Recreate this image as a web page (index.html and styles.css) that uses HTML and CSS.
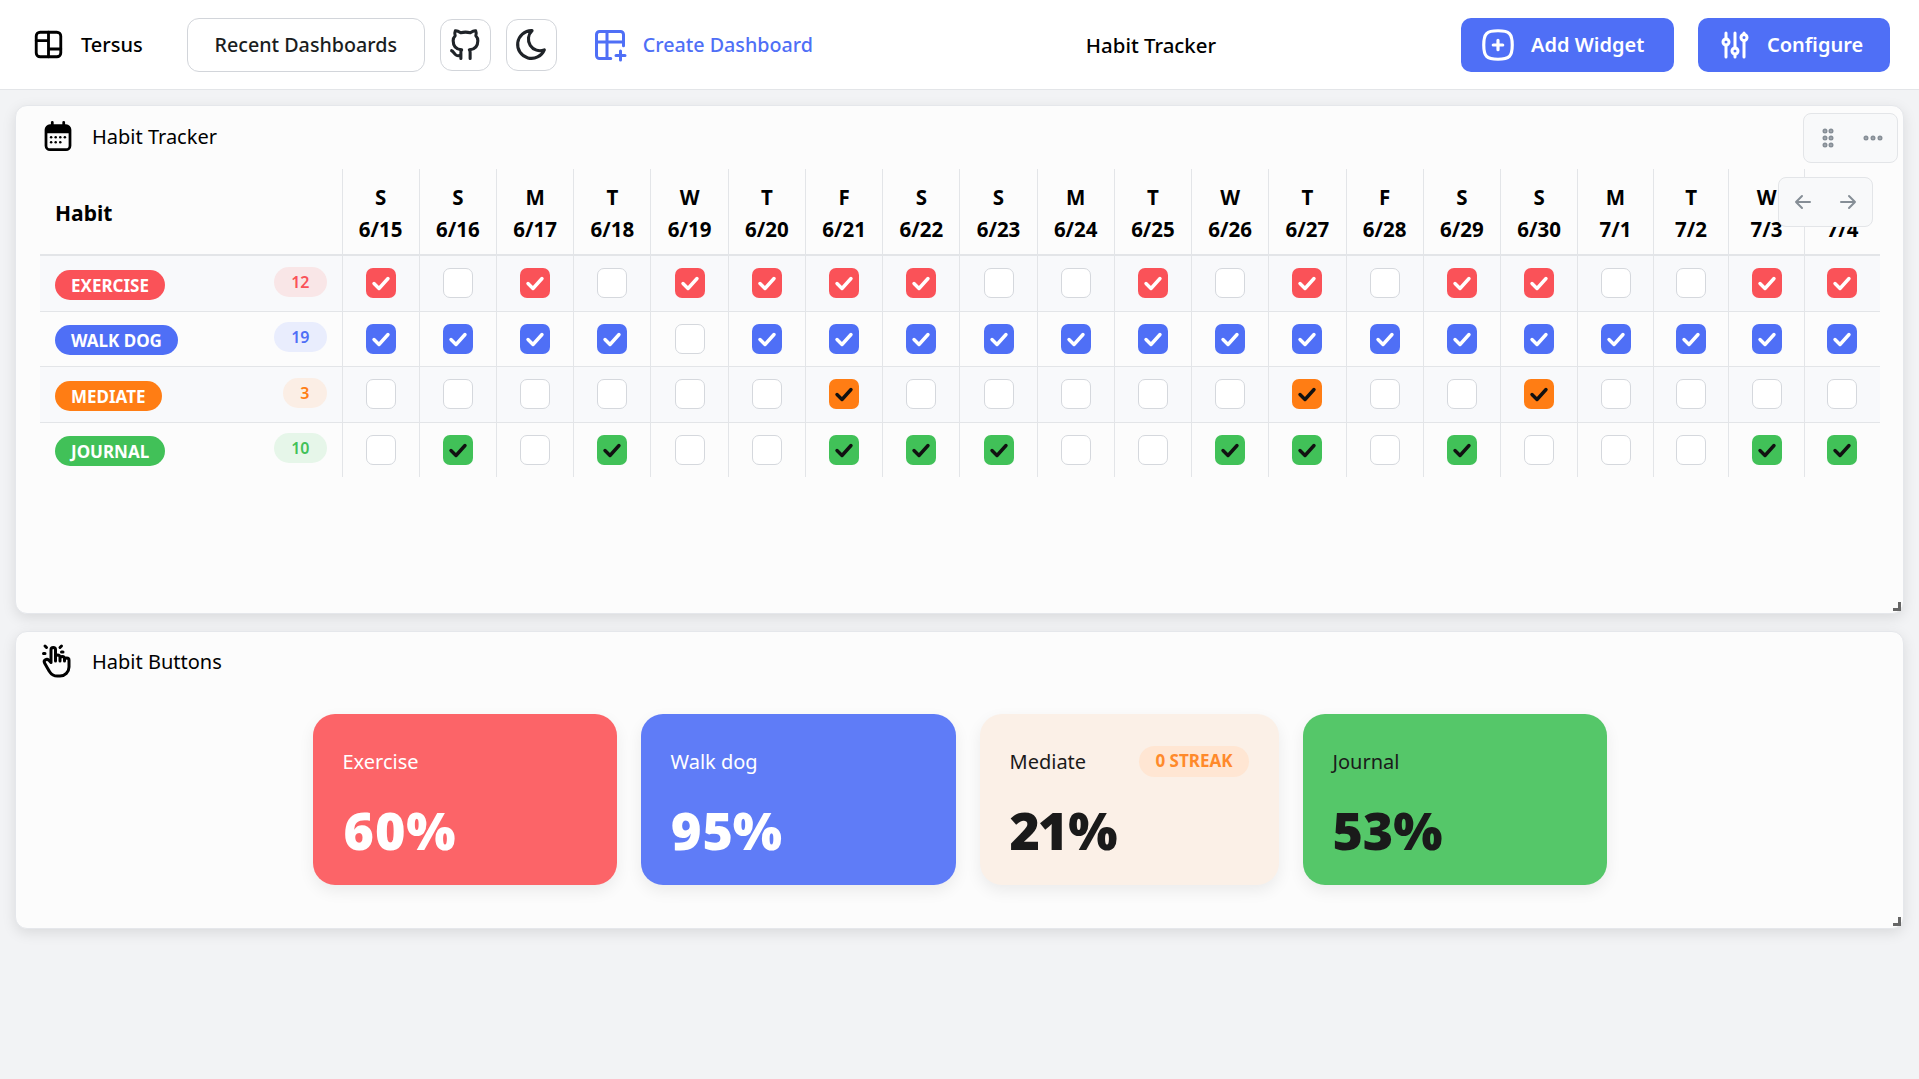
FILE: index.html
```html
<!DOCTYPE html>
<html lang="en">
<head>
  <meta charset="UTF-8">
  <meta name="viewport" content="width=device-width, initial-scale=1.0">
  <title>Habit Tracker</title>
  <link rel="stylesheet" href="styles.css">
</head>
<body>
  <svg class="defs" width="0" height="0">
    <symbol id="check" viewBox="0 0 24 24"><path d="M5 12.500l5 5l9 -10" fill="none" stroke="currentColor" stroke-width="3.400" stroke-linecap="round" stroke-linejoin="round"/></symbol>
  </svg>

  <nav class="navbar">
    <a class="brand">
      <svg class="icon icon-logo" viewBox="0 0 24 24"><rect x="2.500" y="2.500" width="19" height="19" rx="3"/><path d="M12 2.500v19M2.500 9h9.500M12 15.500h9.500"/></svg>
      <span>Tersus</span>
    </a>
    <button class="btn-outline">Recent Dashboards</button>
    <button class="btn-icon">
      <svg class="icon" viewBox="0 0 24 24"><path d="M9 19c-4.300 1.400 -4.300 -2.500 -6 -3m12 5v-3.500c0 -1 .1 -1.400 -.5 -2c2.800 -.3 5.500 -1.400 5.500 -6a4.600 4.600 0 0 0 -1.300 -3.200a4.200 4.200 0 0 0 -.1 -3.200s-1.100 -.3 -3.500 1.300a12.300 12.300 0 0 0 -6.200 0c-2.400 -1.600 -3.500 -1.300 -3.500 -1.300a4.200 4.200 0 0 0 -.1 3.200a4.600 4.600 0 0 0 -1.300 3.200c0 4.600 2.700 5.700 5.500 6c-.6 .6 -.6 1.200 -.5 2v3.500"/></svg>
    </button>
    <button class="btn-icon">
      <svg class="icon" viewBox="0 0 24 24"><path d="M12 3c.132 0 .263 0 .393 0a7.500 7.500 0 0 0 7.920 12.446a9 9 0 1 1 -8.313 -12.454z"/></svg>
    </button>
    <a class="create-link">
      <svg class="icon icon-create" viewBox="0 0 24 24"><path d="M12.500 21h-7.500a2 2 0 0 1 -2 -2v-14a2 2 0 0 1 2 -2h14a2 2 0 0 1 2 2v7.500M3 10h18M10 3v18M16 19h6M19 16v6"/></svg>
      <span>Create Dashboard</span>
    </a>
    <div class="nav-title">Habit Tracker</div>
    <button class="btn-primary btn-add">
      <svg class="icon" viewBox="0 0 24 24"><path d="M9 12h6M12 9v6M12 3c7.200 0 9 1.800 9 9s-1.800 9 -9 9s-9 -1.800 -9 -9s1.800 -9 9 -9z"/></svg>
      Add Widget
    </button>
    <button class="btn-primary btn-config">
      <svg class="icon" viewBox="0 0 24 24"><circle cx="6" cy="10" r="2"/><path d="M6 4v4M6 12v8"/><circle cx="12" cy="16" r="2"/><path d="M12 4v10M12 18v2"/><circle cx="18" cy="7" r="2"/><path d="M18 4v1M18 9v11"/></svg>
      Configure
    </button>
  </nav>

  <main class="dashboard">
    <section class="widget widget-tracker">
      <header class="widget-header">
        <svg class="widget-icon icon-calendar" viewBox="0 0 28 28"><rect x="3.500" y="5" width="21" height="21" rx="3.500" fill="none" stroke="currentColor" stroke-width="2.400"/><path d="M3.500 8.500a3.500 3.500 0 0 1 3.500 -3.500h14a3.500 3.500 0 0 1 3.500 3.500v3h-21z" fill="currentColor"/><path d="M9 2v5M19 2v5" stroke="currentColor" stroke-width="2.400" stroke-linecap="round"/><g fill="currentColor"><circle cx="8" cy="15" r="1.100"/><circle cx="12" cy="15" r="1.100"/><circle cx="16" cy="15" r="1.100"/><circle cx="20" cy="15" r="1.100"/><circle cx="8" cy="19.500" r="1.100"/><circle cx="12" cy="19.500" r="1.100"/><circle cx="16" cy="19.500" r="1.100"/></g></svg>
        <h2>Habit Tracker</h2>
      </header>

      <div class="tool-box tool-widget">
        <svg class="tool-icon" viewBox="0 0 24 24" fill="currentColor" stroke="none"><circle cx="9" cy="5" r="1.500"/><circle cx="15" cy="5" r="1.500"/><circle cx="9" cy="12" r="1.500"/><circle cx="15" cy="12" r="1.500"/><circle cx="9" cy="19" r="1.500"/><circle cx="15" cy="19" r="1.500"/></svg>
        <svg class="tool-icon" viewBox="0 0 24 24" fill="currentColor" stroke="none"><circle cx="5" cy="12" r="1.500"/><circle cx="12" cy="12" r="1.500"/><circle cx="19" cy="12" r="1.500"/></svg>
      </div>
      <div class="tool-box tool-scroll">
        <svg class="tool-icon arrow" viewBox="0 0 24 24"><path d="M5 12h14M5 12l6 6M5 12l6 -6"/></svg>
        <svg class="tool-icon arrow" viewBox="0 0 24 24"><path d="M5 12h14M13 18l6 -6M13 6l6 6"/></svg>
      </div>

      <table class="habit-table">
        <colgroup>
          <col class="col-habit">
          <col class="col-day"><col class="col-day"><col class="col-day"><col class="col-day"><col class="col-day"><col class="col-day"><col class="col-day"><col class="col-day">
          <col class="col-day"><col class="col-day"><col class="col-day"><col class="col-day"><col class="col-day"><col class="col-day"><col class="col-day"><col class="col-day">
          <col class="col-day-sm"><col class="col-day-sm"><col class="col-day-sm"><col class="col-day-sm">
        </colgroup>
        <thead>
          <tr>
            <th class="habit-head">Habit</th>
            <th>S<br>6/15</th><th>S<br>6/16</th><th>M<br>6/17</th><th>T<br>6/18</th><th>W<br>6/19</th><th>T<br>6/20</th><th>F<br>6/21</th><th>S<br>6/22</th><th>S<br>6/23</th><th>M<br>6/24</th>
            <th>T<br>6/25</th><th>W<br>6/26</th><th>T<br>6/27</th><th>F<br>6/28</th><th>S<br>6/29</th><th>S<br>6/30</th><th>M<br>7/1</th><th>T<br>7/2</th><th>W<br>7/3</th><th>T<br>7/4</th>
          </tr>
        </thead>
        <tbody>
          <tr class="red">
            <td><div class="habit-cell"><span class="pill">EXERCISE</span><span class="count">12</span></div></td>
            <td><span class="box on"><svg><use href="#check"/></svg></span></td><td><span class="box"></span></td><td><span class="box on"><svg><use href="#check"/></svg></span></td><td><span class="box"></span></td><td><span class="box on"><svg><use href="#check"/></svg></span></td>
            <td><span class="box on"><svg><use href="#check"/></svg></span></td><td><span class="box on"><svg><use href="#check"/></svg></span></td><td><span class="box on"><svg><use href="#check"/></svg></span></td><td><span class="box"></span></td><td><span class="box"></span></td>
            <td><span class="box on"><svg><use href="#check"/></svg></span></td><td><span class="box"></span></td><td><span class="box on"><svg><use href="#check"/></svg></span></td><td><span class="box"></span></td><td><span class="box on"><svg><use href="#check"/></svg></span></td>
            <td><span class="box on"><svg><use href="#check"/></svg></span></td><td><span class="box"></span></td><td><span class="box"></span></td><td><span class="box on"><svg><use href="#check"/></svg></span></td><td><span class="box on"><svg><use href="#check"/></svg></span></td>
          </tr>
          <tr class="blue">
            <td><div class="habit-cell"><span class="pill">WALK DOG</span><span class="count">19</span></div></td>
            <td><span class="box on"><svg><use href="#check"/></svg></span></td><td><span class="box on"><svg><use href="#check"/></svg></span></td><td><span class="box on"><svg><use href="#check"/></svg></span></td><td><span class="box on"><svg><use href="#check"/></svg></span></td><td><span class="box"></span></td>
            <td><span class="box on"><svg><use href="#check"/></svg></span></td><td><span class="box on"><svg><use href="#check"/></svg></span></td><td><span class="box on"><svg><use href="#check"/></svg></span></td><td><span class="box on"><svg><use href="#check"/></svg></span></td><td><span class="box on"><svg><use href="#check"/></svg></span></td>
            <td><span class="box on"><svg><use href="#check"/></svg></span></td><td><span class="box on"><svg><use href="#check"/></svg></span></td><td><span class="box on"><svg><use href="#check"/></svg></span></td><td><span class="box on"><svg><use href="#check"/></svg></span></td><td><span class="box on"><svg><use href="#check"/></svg></span></td>
            <td><span class="box on"><svg><use href="#check"/></svg></span></td><td><span class="box on"><svg><use href="#check"/></svg></span></td><td><span class="box on"><svg><use href="#check"/></svg></span></td><td><span class="box on"><svg><use href="#check"/></svg></span></td><td><span class="box on"><svg><use href="#check"/></svg></span></td>
          </tr>
          <tr class="orange">
            <td><div class="habit-cell"><span class="pill">MEDIATE</span><span class="count">3</span></div></td>
            <td><span class="box"></span></td><td><span class="box"></span></td><td><span class="box"></span></td><td><span class="box"></span></td><td><span class="box"></span></td>
            <td><span class="box"></span></td><td><span class="box on"><svg><use href="#check"/></svg></span></td><td><span class="box"></span></td><td><span class="box"></span></td><td><span class="box"></span></td>
            <td><span class="box"></span></td><td><span class="box"></span></td><td><span class="box on"><svg><use href="#check"/></svg></span></td><td><span class="box"></span></td><td><span class="box"></span></td>
            <td><span class="box on"><svg><use href="#check"/></svg></span></td><td><span class="box"></span></td><td><span class="box"></span></td><td><span class="box"></span></td><td><span class="box"></span></td>
          </tr>
          <tr class="green">
            <td><div class="habit-cell"><span class="pill">JOURNAL</span><span class="count">10</span></div></td>
            <td><span class="box"></span></td><td><span class="box on"><svg><use href="#check"/></svg></span></td><td><span class="box"></span></td><td><span class="box on"><svg><use href="#check"/></svg></span></td><td><span class="box"></span></td>
            <td><span class="box"></span></td><td><span class="box on"><svg><use href="#check"/></svg></span></td><td><span class="box on"><svg><use href="#check"/></svg></span></td><td><span class="box on"><svg><use href="#check"/></svg></span></td><td><span class="box"></span></td>
            <td><span class="box"></span></td><td><span class="box on"><svg><use href="#check"/></svg></span></td><td><span class="box on"><svg><use href="#check"/></svg></span></td><td><span class="box"></span></td><td><span class="box on"><svg><use href="#check"/></svg></span></td>
            <td><span class="box"></span></td><td><span class="box"></span></td><td><span class="box"></span></td><td><span class="box on"><svg><use href="#check"/></svg></span></td><td><span class="box on"><svg><use href="#check"/></svg></span></td>
          </tr>
        </tbody>
      </table>
      <span class="resize-handle"></span>
    </section>

    <section class="widget widget-buttons">
      <header class="widget-header">
        <svg class="widget-icon icon-hand" viewBox="0 0 24 24" fill="none" stroke="currentColor" stroke-width="2" stroke-linecap="round" stroke-linejoin="round"><path d="M8 13v-8.500a1.500 1.500 0 0 1 3 0v7.500M11 11.500v-2a1.500 1.500 0 0 1 3 0v2.500M14 10.500a1.500 1.500 0 0 1 3 0v1.500M17 11.500a1.500 1.500 0 0 1 3 0v4.500a6 6 0 0 1 -6 6h-2h.208a6 6 0 0 1 -5.012 -2.700l-.196 -.3c-.312 -.479 -1.407 -2.388 -3.286 -5.728a1.500 1.500 0 0 1 .536 -2.022a1.867 1.867 0 0 1 2.280 .28l1.470 1.470M5 3l-1 -1M4 7h-1M14 3l1 -1M15 6h1"/></svg>
        <h2>Habit Buttons</h2>
      </header>
      <div class="stat-row">
        <div class="stat stat-red">
          <div class="stat-top"><span>Exercise</span></div>
          <div class="stat-value">60%</div>
        </div>
        <div class="stat stat-blue">
          <div class="stat-top"><span>Walk dog</span></div>
          <div class="stat-value">95%</div>
        </div>
        <div class="stat stat-cream">
          <div class="stat-top"><span>Mediate</span><span class="streak">0 STREAK</span></div>
          <div class="stat-value">21%</div>
        </div>
        <div class="stat stat-green">
          <div class="stat-top"><span>Journal</span></div>
          <div class="stat-value">53%</div>
        </div>
      </div>
      <span class="resize-handle"></span>
    </section>
  </main>
</body>
</html>
```

FILE: styles.css
```css
* { box-sizing: border-box; }
body { margin: 0; min-height: 1079px; background: #f2f3f5; color: #000; font-family: "Noto Sans", sans-serif; }
button { font-family: inherit; cursor: pointer; }
.defs { position: absolute; }

.icon { width: 37px; height: 37px; fill: none; stroke: currentColor; stroke-width: 2; stroke-linecap: round; stroke-linejoin: round; flex: none; }

/* top bar */
.navbar { display: flex; align-items: center; height: 90px; padding: 0 29px 0 33px; background: #fff; border-bottom: 1px solid #e3e5e8; }
.brand { display: flex; align-items: center; gap: 17px; font-size: 20px; font-weight: 500; margin-right: 44px; }
.icon-logo { width: 31px; height: 31px; stroke-width: 2.200; }
.btn-outline { height: 54px; width: 238px; border: 1px solid #d2d5da; border-radius: 12px; background: #fff; font-size: 19.700px; font-weight: 500; color: #1a1d21; margin-right: 15px; }
.btn-icon { width: 51px; height: 52px; padding: 0; display: flex; align-items: center; justify-content: center; border: 1px solid #d2d5da; border-radius: 12px; background: #fff; color: #1f2328; margin-right: 15px; }
.create-link { display: flex; align-items: center; gap: 15px; margin-left: 20px; color: #4f6ff6; font-size: 19.700px; font-weight: 500; }
.icon-create { width: 36px; height: 36px; }
.nav-title { flex: 1; padding-left: 28px; text-align: center; font-size: 20.400px; font-weight: 500; }
.btn-primary { height: 54px; display: flex; align-items: center; border: 0; border-radius: 10px; background: #4f6ff6; color: #fff; font-size: 20px; font-weight: 600; }
.btn-add { width: 213px; gap: 14px; padding: 0 0 0 18px; margin-right: 24px; }
.btn-add .icon { width: 38px; height: 38px; }
.btn-config { width: 192px; gap: 14px; padding: 0 0 0 19px; }
.btn-config .icon { width: 36px; height: 36px; }

/* widgets */
.dashboard { display: flex; flex-direction: column; gap: 17px; padding: 15px 15px 0; }
.widget { position: relative; background: #fcfcfc; border: 1px solid #e5e7eb; border-radius: 12px; box-shadow: 0 4px 14px rgba(0, 0, 0, .1); padding: 0 24px; }
.widget-tracker { height: 509px; }
.widget-buttons { height: 298px; }
.widget-header { display: flex; align-items: center; gap: 19px; height: 63px; padding: 0 0 3px 3px; }
.widget-header h2 { margin: 0; font-size: 20px; font-weight: 400; }
.widget-icon { width: 30px; height: 30px; flex: none; }
.icon-calendar { width: 32px; height: 32px; margin: 0 -1px; }
.icon-hand { width: 36px; height: 36px; margin: 0 -1.500px 0 -4.500px; }
.widget-buttons .widget-header { height: 60px; padding-bottom: 2px; }
.resize-handle { position: absolute; right: 2px; bottom: 2px; width: 8px; height: 9px; border-right: 3px solid #666; border-bottom: 3px solid #666; }

.tool-box { position: absolute; display: flex; align-items: center; justify-content: center; gap: 21px; width: 95px; height: 50px; background: #f8f9fa; border: 1px solid #e3e5e8; border-radius: 8px; color: #868e96; z-index: 2; }
.tool-widget { top: 7px; right: 5px; }
.tool-scroll { top: 71px; right: 30px; }
.tool-icon { width: 24px; height: 24px; fill: none; stroke: currentColor; stroke-width: 2; stroke-linecap: round; stroke-linejoin: round; flex: none; }

/* habit table */
.habit-table { width: 1840px; border-collapse: collapse; table-layout: fixed; }
.col-habit { width: 302px; }
.col-day { width: 77.240px; }
.col-day-sm { width: 75.540px; }
.habit-table th { height: 86px; padding: 2px 0 0; font-size: 20.500px; font-weight: 700; line-height: 32px; text-align: center; border-left: 1px solid #e3e5e8; border-bottom: 2px solid #e3e5e8; }
.habit-table th.habit-head { padding-left: 15px; font-size: 21px; text-align: left; border-left: 0; }
.habit-table td { height: 55px; padding: 0; text-align: center; border-left: 1px solid #e3e5e8; border-top: 1px solid #e3e5e8; }
.habit-table .red td, .habit-table .orange td { height: 56px; }
.habit-table td:first-child { border-left: 0; padding: 0 15px; }
.habit-table tbody tr:first-child td { border-top: 0; }
.red, .orange { background: #f8f9fb; }

.habit-cell { display: flex; justify-content: space-between; align-items: flex-start; }
.pill { height: 30px; margin-top: 3px; padding: 0 16px; border-radius: 15px; color: #fff; font-size: 17px; font-weight: 700; line-height: 31px; }
.count { min-width: 42px; height: 30px; padding: 0 17px; border-radius: 15px; font-size: 16px; font-weight: 600; line-height: 30px; text-align: center; }
.box { display: inline-flex; align-items: center; justify-content: center; width: 30px; height: 30px; vertical-align: middle; background: #fff; border: 1px solid #d5d8dd; border-radius: 7px; }
.box svg { width: 24px; height: 24px; color: #fff; }
.box.on { border: 0; }

.red .pill, .red .box.on { background: #fa5258; }
.red .count { background: #f9e6e7; color: #fa5258; }
.blue .pill, .blue .box.on { background: #4f6ff6; }
.blue .count { background: #e9edfd; color: #4f6ff6; }
.orange .pill, .orange .box.on { background: #ff7d14; }
.orange .count { background: #fbeee5; color: #ff7d14; }
.green .pill, .green .box.on { background: #41c158; }
.green .count { background: #e6f6e9; color: #41c158; }
.orange .box svg, .green .box svg { color: #111; }

/* habit buttons */
.stat-row { display: flex; justify-content: center; gap: 24px; margin-top: 22px; }
.stat { height: 171px; padding: 27px 30px; border-radius: 22px; box-shadow: 0 6px 16px rgba(0, 0, 0, .07); }
.stat-top { display: flex; justify-content: space-between; align-items: center; height: 40px; font-size: 20px; }
.stat-value { margin-top: 15px; font-size: 52px; font-weight: 900; font-variant-numeric: proportional-nums; line-height: 68px; }
.stat-red { width: 304px; background: #fc6468; color: #fff; }
.stat-blue { width: 315px; background: #5f7cf7; color: #fff; }
.stat-cream { width: 299px; background: #fbf0e7; color: #1a1a1a; }
.stat-green { width: 304px; background: #55c769; color: #1a1a1a; }
.streak { height: 31px; padding: 0 16px; border-radius: 16px; background: #ffe6d3; color: #ff8a2b; font-size: 17px; font-weight: 700; line-height: 30px; }
```
